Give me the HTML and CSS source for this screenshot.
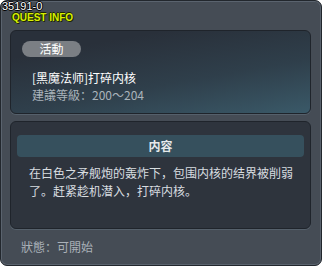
FILE: index.html
```html
<!DOCTYPE html>
<html lang="zh">

<head>
  <meta charset="UTF-8">
  <title>Quest Info</title>
  <link rel="stylesheet" href="styles.css">
</head>

<body>
  <div class="window">
    <div class="quest-id">35191-0</div>
    <div class="title">QUEST INFO</div>

    <div class="summary">
      <span class="tag">活動</span>
      <div class="quest-name">[黑魔法师]打碎内核</div>
      <div class="quest-level">建議等級：200～204</div>
    </div>

    <div class="content">
      <div class="content-head">内容</div>
      <p class="content-text">在白色之矛舰炮的轰炸下，包围内核的结界被削弱<br>了。赶紧趁机潜入，打碎内核。</p>
    </div>

    <div class="status">狀態：可開始</div>
  </div>
</body>

</html>
```

FILE: styles.css
```css
* {
  box-sizing: border-box;
  margin: 0;
  padding: 0;
}

body {
  background: #ffffff;
  font-family: "Noto Sans CJK SC", "DejaVu Sans", sans-serif;
  font-size: 12px;
  width: 322px;
  height: 266px;
  overflow: hidden;
}

.window {
  position: relative;
  width: 322px;
  height: 266px;
  background: #454c55;
  border: 1px solid #22272d;
  border-radius: 7px;
  box-shadow: inset 0 0 0 1px #5a636e;
  padding: 29px 10px 0 9px;
  display: flex;
  flex-direction: column;
}

.quest-id {
  position: absolute;
  left: 1px;
  top: 0;
  font-family: "Liberation Sans", sans-serif;
  font-size: 11px;
  line-height: 10px;
  color: #ffffff;
  text-shadow: 1px 0 #000, -1px 0 #000, 0 1px #000, 0 -1px #000;
}

.title {
  position: absolute;
  left: 11px;
  top: 11px;
  font-family: "Liberation Sans", sans-serif;
  font-size: 10px;
  line-height: 11px;
  font-weight: bold;
  color: #d8f000;
  text-shadow: 1px 1px #1e2600, -1px 0 #1e2600, 0 -1px #1e2600;
}

.summary {
  height: 84px;
  border: 1px solid #1f242b;
  border-radius: 6px;
  box-shadow: 0 1px 0 #55606b;
  background: linear-gradient(170deg, #29303a 20%, #2f3f4b 60%, #3a5968 100%);
  padding: 9px 11px 0;
}

.tag {
  display: inline-block;
  width: 59px;
  height: 16px;
  line-height: 16px;
  border-radius: 8px;
  background: #7b7f84;
  color: #ffffff;
  text-align: center;
  font-size: 12px;
}

.quest-name {
  margin: 13px 0 0 10px;
  color: #ffffff;
  line-height: 16px;
}

.quest-level {
  margin: 1px 0 0 10px;
  color: #aab3bb;
  line-height: 16px;
}

.content {
  margin-top: 7px;
  height: 108px;
  border: 1px solid #1f242b;
  border-radius: 6px;
  box-shadow: 0 1px 0 #55606b;
  background: #2e343d;
  padding: 13px 6px 0;
}

.content-head {
  height: 22px;
  line-height: 22px;
  border-radius: 4px;
  background: #36505d;
  color: #e6eaec;
  font-weight: bold;
  text-align: center;
}

.content-text {
  margin: 7px 0 0 12px;
  color: #d8dde0;
  line-height: 18px;
}

.status {
  margin: 10px 0 0 11px;
  color: #aab1b8;
  line-height: 16px;
}
```
